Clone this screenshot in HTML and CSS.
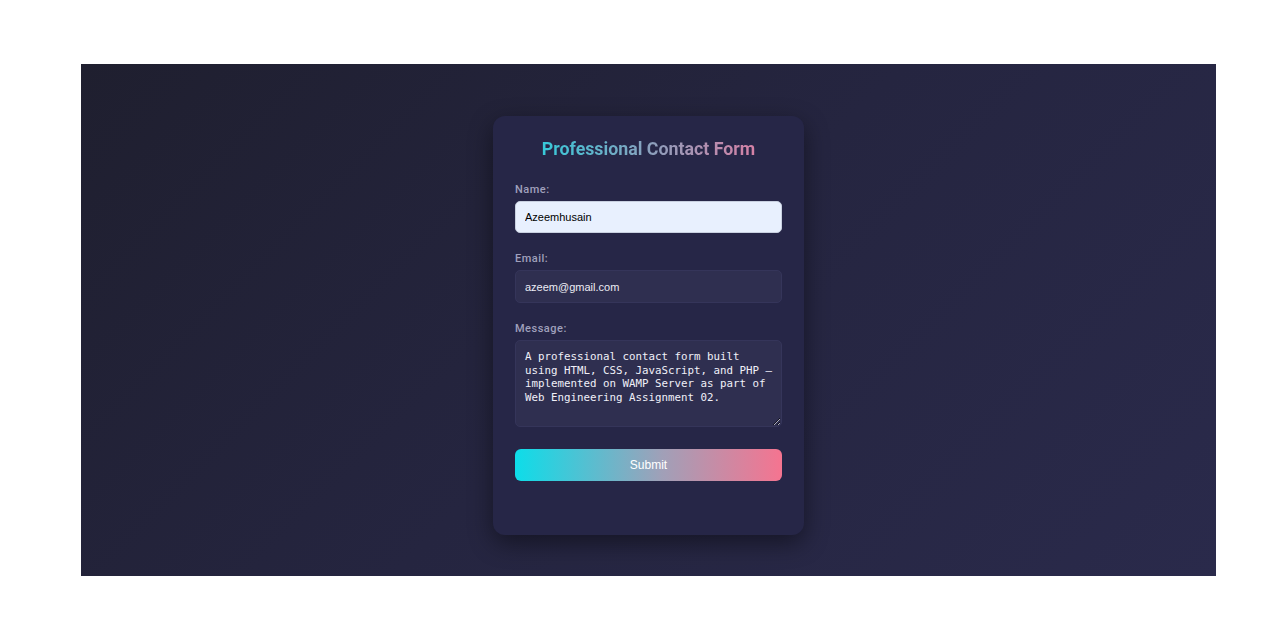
FILE: index.html
```html
<!DOCTYPE html>
<html>
<head>
<meta charset="utf-8">
<link rel="stylesheet" href="styles.css">
</head>
<body>
<div class="stage">
  <form class="card">
    <h1 class="title">Professional Contact Form</h1>
    <label class="label">Name:</label>
    <input class="field field-filled" type="text" value="Azeemhusain">
    <label class="label">Email:</label>
    <input class="field" type="text" value="azeem@gmail.com">
    <label class="label">Message:</label>
    <textarea class="field area">A professional contact form built using HTML, CSS, JavaScript, and PHP — implemented on WAMP Server as part of Web Engineering Assignment 02.</textarea>
    <button class="submit" type="button">Submit</button>
  </form>
</div>
</body>
</html>
```
FILE: styles.css
```css
html, body {
  margin: 0;
  padding: 0;
  background: #ffffff;
}
body {
  padding: 64px 64px 64px 81px;
  font-family: Roboto, "Liberation Sans", sans-serif;
}
.stage {
  width: 1135px;
  height: 512px;
  background: linear-gradient(135deg, #1f1f2f 0%, #252540 50%, #2a2a4b 100%);
  display: flex;
  justify-content: center;
  align-items: flex-start;
  padding-top: 52px;
  box-sizing: border-box;
}
.card {
  width: 311px;
  height: 419px;
  box-sizing: border-box;
  background: #262647;
  border-radius: 12px;
  padding: 22px 22px 22px;
  display: flex;
  flex-direction: column;
  box-shadow: 0 8px 24px rgba(0,0,0,0.45);
}
.title {
  margin: 0 0 22px;
  text-align: center;
  font-size: 17.8px;
  font-weight: 700;
  line-height: 22px;
  background: linear-gradient(90deg, #22d3e0 0%, #8aa0bd 50%, #e879a0 100%);
  -webkit-background-clip: text;
  background-clip: text;
  color: transparent;
}
.label {
  font-size: 11px;
  line-height: 13px;
  color: #a0a0bc;
  font-weight: 500;
  letter-spacing: 0.5px;
  margin-bottom: 5px;
}
.label:first-of-type {
  margin-top: 1px;
}
.field {
  box-sizing: border-box;
  width: 267px;
  height: 33px;
  border: 1px solid #35355a;
  border-radius: 5px;
  background: #2f2f50;
  color: #ececf4;
  font-family: "Liberation Sans", Arial, sans-serif;
  font-size: 11px;
  padding: 0 9px;
  margin: 0 0 19px;
  outline: none;
}
.field-filled {
  background: #e8f0fe;
  color: #000000;
  border-color: #c8d0e0;
  height: 32px;
  margin-bottom: 19px;
}
.area {
  height: 87px;
  padding: 9px 9px;
  font-family: "DejaVu Sans Mono", monospace;
  font-size: 10.8px;
  line-height: 13.5px;
  color: #f0f0f8;
  resize: vertical;
  margin-bottom: 22px;
}
.submit {
  width: 267px;
  height: 32px;
  border: none;
  border-radius: 6px;
  background: linear-gradient(90deg, #0ddde9 0%, #a0a0b8 55%, #f57490 100%);
  color: #ffffff;
  font-family: "Liberation Sans", Arial, sans-serif;
  font-size: 12px;
}
```
